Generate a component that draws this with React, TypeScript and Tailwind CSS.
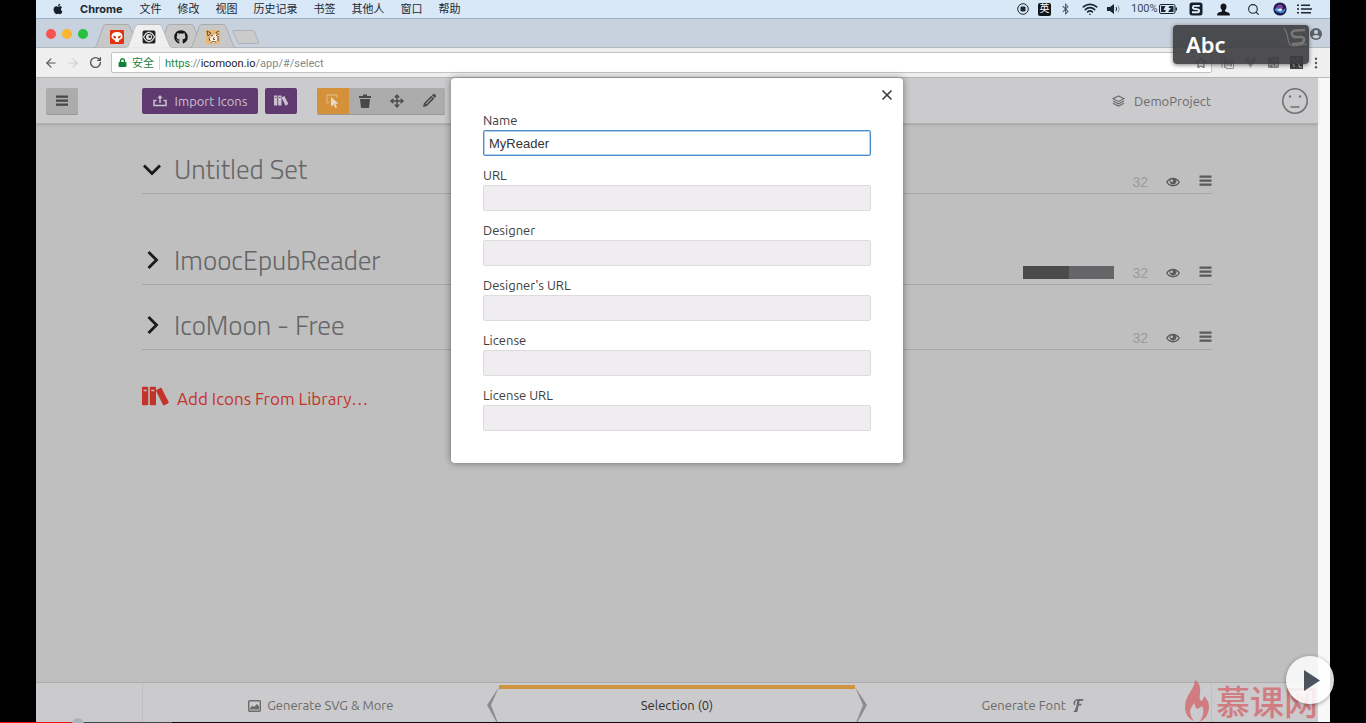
import React from "react";
import { ImBooks, ImEye, ImFont, ImPencil } from "react-icons/im";
import { FaApple, FaBluetoothB, FaGithub, FaLock } from "react-icons/fa";
import { ArrowLeft, ArrowRight, Move, RotateCw, Search, Star, Wifi, X } from "lucide-react";

const MENUS = ["文件", "修改", "视图", "历史记录", "书签", "其他人", "窗口", "帮助"];

const FIELDS = [
  { id: "name", label: "Name", value: "MyReader" },
  { id: "url", label: "URL", value: "" },
  { id: "designer", label: "Designer", value: "" },
  { id: "designer-url", label: "Designer's URL", value: "" },
  { id: "license", label: "License", value: "" },
  { id: "license-url", label: "License URL", value: "" },
];

function Bars({ className }: { className: string }) {
  return (
    <svg viewBox="0 0 12 11" className={className} fill="currentColor" aria-hidden="true">
      <rect x="0" y="0.5" width="12" height="2.300" />
      <rect x="0" y="4.5" width="12" height="2.300" />
      <rect x="0" y="8.5" width="12" height="2.300" />
    </svg>
  );
}

function SogouMark({ className }: { className: string }) {
  return (
    <svg viewBox="0 0 14 14" className={className} aria-hidden="true">
      <rect x="0.5" y="0.5" width="13" height="13" rx="2.5" fill="#14202c" />
      <path d="M10.8 3.9H5.2c-1.600 0-1.800 2.600-.2 2.900l4 .6c1.700.3 1.500 2.900-.2 2.900H3" fill="none" stroke="#e4eef8" strokeWidth="1.900" />
    </svg>
  );
}

function MenuBar() {
  return (
    <div className="flex h-[19px] items-center border-b border-[#9db2c9] bg-[#d8e8f7] pl-4 pr-[18px] text-[11px] text-[#1d2730]">
      <FaApple className="mr-4 size-3 shrink-0 text-[#17202a]" />
      <span className="mr-[17px] font-['Inter'] font-bold">Chrome</span>
      <nav className="flex gap-4">
        {MENUS.map((m) => (
          <span key={m} className="whitespace-nowrap">{m}</span>
        ))}
      </nav>
      <div className="ml-auto flex items-center">
        <svg viewBox="0 0 12 12" className="size-3" aria-hidden="true">
          <circle cx="6" cy="6" r="5.300" fill="none" stroke="#1d2730" />
          <rect x="3.500" y="3.500" width="5" height="5" rx="1" fill="#1d2730" />
        </svg>
        <span className="ml-[9px] flex size-[13px] items-center justify-center rounded-xs bg-[#10161c] text-[10px] leading-none text-white">英</span>
        <FaBluetoothB className="ml-[10px] h-3 w-[9px] text-[#46535f]" />
        <Wifi className="ml-3 size-4" strokeWidth={2.5} />
        <svg viewBox="0 0 14 12" className="ml-[9px] h-3 w-[14px]" aria-hidden="true">
          <path d="M0 4h3l4-3v10L3 8H0z" fill="#1d2730" />
          <path d="M9 4q1.200 2 0 4" fill="none" stroke="#1d2730" />
          <path d="M11 2.500q2.500 3.500 0 7" fill="none" stroke="#8a98a5" />
        </svg>
        <span className="ml-[10px] w-[26px] font-['Roboto'] text-[#3c4853]">100%</span>
        <svg viewBox="0 0 19 10" className="ml-[2px] h-[10px] w-[19px]" aria-hidden="true">
          <rect x="0.500" y="0.500" width="15.500" height="9" rx="1.500" fill="none" stroke="#1d2730" />
          <path d="M2 2h4.500L4.500 6H7l-1 2H2zM14.500 8H9l3-4H9.500l1-2h4z" fill="#1d2730" />
          <path d="M17.300 3.500v3" stroke="#1d2730" strokeWidth="1.500" />
        </svg>
        <SogouMark className="ml-[11px] size-[14px]" />
        <svg viewBox="0 0 13 13" className="ml-[14px] size-[13px]" fill="#10161c" aria-hidden="true">
          <path d="M6.500.5c2 0 3 1.300 3 3.200 0 1.500-.7 2.500-1.500 3.300v1.300c1 1 4.300 1 4.800 2.700V12.500H.2V11c.5-1.700 3.800-1.700 4.800-2.700V7C4.200 6.200 3.500 5.200 3.500 3.700 3.500 1.800 4.500.5 6.500.5z" />
        </svg>
        <Search className="ml-[17px] size-[13px]" strokeWidth={2} />
        <svg viewBox="0 0 14 14" className="ml-[13px] size-[14px]" aria-hidden="true">
          <circle cx="7" cy="7" r="6.600" fill="#1c1f4e" />
          <path d="M1.500 8q3-5 5.500-1.500T12.500 6q-.5 4.500-4 5T1.500 8z" fill="#4795e0" />
          <path d="M3 5q2.500-3.500 6-2l1.500 3L7 8z" fill="#7f3f9d" />
          <path d="M4 8l3-1.500L9.500 7 7.500 9z" fill="#fff" />
        </svg>
        <svg viewBox="0 0 15 10" className="ml-[10px] h-[10px] w-[15px]" fill="#1d2730" aria-hidden="true">
          <path d="M0 .5h2V2H0zM0 4.300h2v1.500H0zM0 8h2v1.500H0zM4 .5h9V2H4zM4 4.300h11v1.500H4zM4 8h10v1.500H4z" />
        </svg>
      </div>
    </div>
  );
}

function Tab({ active, first, label, children }: { active?: boolean; first?: boolean; label: string; children: React.ReactNode }) {
  return (
    <button
      type="button"
      aria-label={label}
      className={`relative flex h-6 w-[46px] items-center justify-center ${first ? "" : "-ml-[14px]"} ${active ? "z-10" : ""}`}
    >
      <svg viewBox="0 0 46 24" className="absolute inset-0 size-full" aria-hidden="true">
        <path
          d="M0 24Q1.800 23.500 2.800 21L9 3Q9.800.5 12 .5h21q2.200 0 3 2.500l7.200 18q1 2.500 2.800 3z"
          fill={active ? "#f0efef" : "#c9c8c8"}
          stroke={active ? "#b3b6ba" : "#a0a3a6"}
          strokeWidth="0.800"
        />
        {active && <path d="M1 24h44" stroke="#f0efef" strokeWidth="1.500" />}
      </svg>
      <span className="relative pt-px">{children}</span>
    </button>
  );
}

function TabStrip() {
  return (
    <div className="flex h-[29px] items-end border-b border-[#b4b8bd] bg-[#c8d2de] pl-[10px] pr-2">
      <div className="mb-2 mr-[6px] flex gap-[6px] self-end">
        <span className="size-[10px] rounded-full bg-[#f5544f]" />
        <span className="size-[10px] rounded-full bg-[#fbb52e]" />
        <span className="size-[10px] rounded-full bg-[#27c13d]" />
      </div>
      <div className="-mb-px flex">
        <Tab label="慕课网" first>
          <svg viewBox="0 0 14 14" className="size-[14px]" aria-hidden="true">
            <rect width="14" height="14" rx="1" fill="#e2330f" />
            <path d="M1.500 6.500Q1.500 2 7 2t5.500 4.500Q12.500 9 9.500 9.800L8.500 12h-3l-1-2.200Q1.500 9 1.500 6.500z" fill="#fff" />
            <path d="M3 5.500l3 1v1.800H4zM11 5.500l-3 1v1.800h2z" fill="#e2330f" />
          </svg>
        </Tab>
        <Tab label="IcoMoon App" active>
          <svg viewBox="0 0 14 14" className="size-[14px]" aria-hidden="true">
            <rect x="0.600" y="0.600" width="12.800" height="12.800" rx="1.500" fill="#222" />
            <path d="M1.500 7L4 3.500 7 2l3 1.500L12.500 7 10 10.500 7 12l-3-1.500z" fill="none" stroke="#f3f3f3" strokeWidth="1.100" />
            <circle cx="7" cy="7" r="3" fill="#e6e6e6" />
            <circle cx="7.800" cy="6.800" r="1.300" fill="#222" />
          </svg>
        </Tab>
        <Tab label="GitHub">
          <FaGithub className="size-[14px] text-[#161616]" />
        </Tab>
        <Tab label="Cat">
          <svg viewBox="0 0 14 14" className="size-[14px]" aria-hidden="true">
            <rect width="14" height="14" fill="#e9b871" />
            <path d="M1 1l4 2 6-1 2 3v6l-3 2H5L2 9z" fill="#e2b67c" />
            <path d="M5 6l5-2 2 5-3 4H6L4 10z" fill="#fbf1df" />
            <path d="M1 1l1 5 3-3zM13 1l-3 1.500L12.500 5M5 6l2-.5M10 5l1 1M3 8l1 3M8 7l-.500 2.500L9 9.500M5 12.500l2-1 3 .5M12 6v5" fill="none" stroke="#5f3f22" strokeWidth="0.900" />
          </svg>
        </Tab>
      </div>
      <button type="button" aria-label="New tab" className="-ml-1 mb-[3px] h-[14px] w-7">
        <svg viewBox="0 0 28 14" className="size-full" aria-hidden="true">
          <path d="M2 .5h18.500q1.500 0 2 1.500l4 10q.5 1.500-1 1.500H7.500q-1.500 0-2-1.500L1 2Q.5.5 2 .5z" fill="#cbcbcb" stroke="#a4a7ab" strokeWidth="0.800" />
        </svg>
      </button>
      <svg viewBox="0 0 12 12" className="mb-[7px] ml-auto size-3" aria-hidden="true">
        <circle cx="6" cy="6" r="6" fill="#5c6168" />
        <circle cx="6" cy="4" r="2" fill="#c8d2de" />
        <path d="M2.300 8.800Q3 7 6 7t3.700 1.800Q8 10.500 6 10.500T2.300 8.800z" fill="#c8d2de" />
      </svg>
    </div>
  );
}

function AddressRow() {
  return (
    <div className="flex h-[30px] items-center border-b border-[#b9b9b9] bg-[#f0efef] pl-2 pr-3">
      <button type="button" aria-label="Back" className="text-[#555]"><ArrowLeft className="size-[14px]" /></button>
      <button type="button" aria-label="Forward" className="ml-2 text-[#cfcfcf]"><ArrowRight className="size-[14px]" /></button>
      <button type="button" aria-label="Reload" className="ml-[9px] text-[#555]"><RotateCw className="size-[13px]" strokeWidth={2.5} /></button>
      <div className="ml-[9px] flex h-[21px] flex-1 items-center rounded-xs border border-[#c2c2c2] bg-white pl-[6px] pr-1 text-[11px]">
        <FaLock className="size-[9px] text-[#128038]" />
        <span className="ml-[5px] border-r border-[#d5d5d5] pr-[5px] leading-[14px] text-[#1b7f3e]">安全</span>
        <span className="ml-[5px] pt-[2px] font-['Roboto'] leading-[14px] text-[#85898c]">
          <span className="text-[#1b8a42]">https</span>://<span className="text-[#222]">icomoon.io</span>/app/#/select
        </span>
        <Star className="ml-auto size-3 text-[#555]" />
      </div>
      <div className="ml-[9px] flex items-center gap-[10px] text-[#999]">
        <svg viewBox="0 0 13 13" className="size-[13px]" aria-hidden="true">
          <path d="M1 1v11M3.500 1v11" stroke="currentColor" />
          <path d="M5 4h7.500v8.500H5zM7 6v4M9 6v4h1.500V6z" fill="none" stroke="currentColor" />
        </svg>
        <svg viewBox="0 0 13 13" className="size-[13px]" aria-hidden="true"><path d="M0 1h4l2.500 5L9 1h4L6.500 12z" fill="#a9aaaa" /></svg>
        <svg viewBox="0 0 13 13" className="size-[13px]" aria-hidden="true">
          <rect x="1" y="1" width="11" height="11" rx="1" fill="#8e8e8e" />
          <path d="M6 3h4M6 5h4M2 9h4v2M8 9h3" stroke="#eee" />
        </svg>
        <svg viewBox="0 0 13 13" className="size-[13px]" aria-hidden="true">
          <rect width="13" height="13" fill="#444" />
          <path d="M1 3h3v2h3V2h4M2 8h2v3M6 7h3v4h3M10 5h2" fill="none" stroke="#bbb" />
        </svg>
      </div>
      <svg viewBox="0 0 4 12" className="ml-[11px] h-3 w-1 shrink-0" fill="#555" aria-hidden="true">
        <circle cx="2" cy="1.700" r="1.200" /><circle cx="2" cy="6" r="1.200" /><circle cx="2" cy="10.300" r="1.200" />
      </svg>
    </div>
  );
}

function AppHeader() {
  const tool = "flex h-[26px] w-8 items-center justify-center";
  return (
    <header className="flex h-[46px] shrink-0 items-center border-b border-[#adadad] bg-[#cbcacc] px-[10px] text-[#494949] shadow-sm">
      <button type="button" aria-label="Menu" className="mr-16 flex h-[26px] w-8 items-center justify-center rounded-xs bg-[#acacac] shadow-[0_1px_0_#979797]">
        <Bars className="h-[11px] w-3" />
      </button>
      <button type="button" className="mr-[7px] flex h-[26px] w-[116px] items-center justify-center gap-2 whitespace-nowrap rounded-xs bg-[#5f3a70] text-[#cbc1d0]">
        <svg viewBox="0 0 14 12" className="h-3 w-[14px]" fill="none" stroke="currentColor" strokeWidth="1.500" aria-hidden="true">
          <path d="M3.500 5.500H1v5h12v-5h-2.500M7 8V2" />
          <path d="M7 0L4.300 3.200h5.400z" fill="currentColor" stroke="none" />
        </svg>
        <span className="pt-[2px] text-[13px]">Import Icons</span>
      </button>
      <button type="button" aria-label="Library" className="mr-5 flex h-[26px] w-8 items-center justify-center rounded-xs bg-[#5f3a70] text-[#cbc1d0]">
        <ImBooks className="size-[15px]" />
      </button>
      <div className="flex overflow-hidden rounded-xs bg-[#acacac] shadow-[0_1px_0_#979797]">
        <button type="button" aria-label="Select" className={`${tool} bg-[#d4913a] text-[#ead9c3]`}>
          <svg viewBox="0 0 14 14" className="size-[14px]" aria-hidden="true">
            <path d="M3.500 8.500H1V1h10v3" fill="none" stroke="#dfb275" strokeWidth="1.300" />
            <path d="M5 3l7.500 6.500-3.300.2 1.800 3.300-1.700.9-1.700-3.400L5 12.500z" fill="currentColor" />
          </svg>
        </button>
        <button type="button" aria-label="Remove" className={tool}>
          <svg viewBox="0 0 14 14" className="size-[14px]" fill="currentColor" aria-hidden="true">
            <path d="M1 2h4V.500h4V2h4v2H1zM2 5h10l-1 9H3z" />
          </svg>
        </button>
        <button type="button" aria-label="Move" className={tool}><Move className="size-[14px]" strokeWidth={2.500} /></button>
        <button type="button" aria-label="Edit" className={tool}><ImPencil className="size-[13px]" /></button>
      </div>
      <div className="ml-auto flex items-center gap-[9px] text-[13px] text-[#6c6c6c]">
        <svg viewBox="0 0 14 13" className="h-3 w-[13px]" fill="none" stroke="currentColor" strokeWidth="1.200" aria-hidden="true">
          <path d="M7 1l6 3-6 3-6-3zM1 6.500l6 3 6-3M1 9l6 3 6-3" />
        </svg>
        <span className="pt-[2px]">DemoProject</span>
      </div>
      <svg viewBox="0 0 26 26" className="ml-[71px] size-[26px] shrink-0" fill="none" stroke="#6f6f6f" strokeWidth="1.500" aria-hidden="true">
        <circle cx="13" cy="13" r="12.200" />
        <path d="M8.500 19h9" />
        <path d="M8 7.500v2M18 7.500v2" strokeWidth="2.200" />
      </svg>
    </header>
  );
}

function SetRow({ title, open, swatch }: { title: string; open?: boolean; swatch?: boolean }) {
  return (
    <section className="flex h-[46px] items-center border-b border-[#a6a6a8]">
      <button type="button" className="flex items-center whitespace-nowrap pb-1 font-['Titillium_Web','Open_Sans',sans-serif] text-[27px] leading-9 font-light text-[#666668]">
        <svg viewBox="0 0 20 20" className="mr-3 size-5" fill="none" stroke="#1a1a1a" strokeWidth="2.800" aria-hidden="true">
          <path d={open ? "M2 6.500l8 8 8-8" : "M6.500 2l8 8-8 8"} />
        </svg>
        {title}
      </button>
      <div className="ml-auto flex items-center pt-[22px] text-[#5c5c5c]">
        {swatch && (
          <div className="mr-[18px] flex h-[13px] w-[91px]">
            <span className="flex-1 bg-[#4a4a4a]" />
            <span className="flex-1 bg-[#656567]" />
          </div>
        )}
        <span className="mr-[18px] font-['Liberation_Sans'] text-sm leading-5 text-[#9b9b9b]">32</span>
        <button type="button" aria-label="Toggle visibility"><ImEye className="size-[14px]" /></button>
        <button type="button" aria-label="Set menu" className="ml-[19px] pb-[2px]"><Bars className="h-[11px] w-[13px]" /></button>
      </div>
    </section>
  );
}

function Dialog() {
  return (
    <div className="pointer-events-none absolute inset-x-0 top-0 z-20 flex justify-center">
      <form role="dialog" aria-label="Set metadata" className="pointer-events-auto relative flex w-[452px] flex-col gap-[9px] rounded-sm bg-white p-8 shadow-[0_0_7px_rgba(0,0,0,0.45)]">
        <button type="button" aria-label="Close" className="absolute right-2 top-[9px] text-[#3c3c3c]"><X className="size-4" strokeWidth={2.500} /></button>
        {FIELDS.map((f, i) => (
          <div key={f.id} className="flex flex-col">
            <label htmlFor={f.id} className="text-[13px] leading-5 text-[#3d3d3d]">{f.label}</label>
            <input
              id={f.id}
              type="text"
              defaultValue={f.value}
              className={`h-[26px] w-full rounded-xs border px-[5px] font-['Liberation_Sans'] text-[13px] text-[#333] outline-none ${
                i === 0 ? "border-[#4c8dcb] bg-white shadow-[inset_0_0_0_1px_#b5d0ea]" : "border-[#dcdcdc] bg-[#efedf0]"
              }`}
            />
          </div>
        ))}
      </form>
    </div>
  );
}

function Footer() {
  const cell = "flex items-center justify-center gap-[6px] whitespace-nowrap pt-[6px]";
  return (
    <footer className="grid h-10 shrink-0 grid-cols-3 border-t border-[#acacac] bg-[#cbcacc] px-[106px] text-[13px] text-[#6b6b6b]">
      <button type="button" className={`${cell} border-l border-[#c0bebf]`}>
        <svg viewBox="0 0 13 12" className="h-3 w-[13px]" aria-hidden="true">
          <rect x="0.700" y="0.700" width="11.600" height="10.600" rx="1" fill="none" stroke="currentColor" strokeWidth="1.400" />
          <path d="M2 9.500V8l2.500-2.500L6 7l3-3 2 2.500v3z" fill="currentColor" />
        </svg>
        Generate SVG &amp; More
      </button>
      <button type="button" className={`${cell} relative text-[#2f2f2f]`}>
        <span className="absolute inset-x-0 top-[2px] h-1 bg-[#cf9440]" />
        <svg viewBox="0 0 12 36" className="absolute -left-3 top-1 h-9 w-3" aria-hidden="true"><path d="M12 0L0 18l10 18h1L4 18z" fill="#8c8c8c" /></svg>
        <svg viewBox="0 0 12 36" className="absolute -right-3 top-1 h-9 w-3" aria-hidden="true"><path d="M0 0l12 18L2 36H1l7-18z" fill="#8c8c8c" /></svg>
        Selection (0)
      </button>
      <button type="button" className={`${cell} border-r border-[#c0bebf]`}>
        Generate Font
        <ImFont className="size-[13px]" />
      </button>
    </footer>
  );
}

export default function App() {
  return (
    <div className="relative flex h-screen flex-col overflow-hidden bg-black font-['Ubuntu','Noto_Sans','Noto_Sans_CJK_SC',sans-serif]">
      <div className="relative mx-9 flex min-h-0 flex-1 flex-col">
        <MenuBar />
        <TabStrip />
        <AddressRow />
        <div className="absolute right-[21px] top-[25px] z-30 flex h-[39px] w-[136px] items-center rounded-sm bg-[#3c3c3e]/90 pl-[13px] font-['Noto_Sans'] text-[22px] font-semibold text-white shadow-[0_1px_4px_rgba(0,0,0,0.5)]">
          Abc
          <svg viewBox="0 0 26 22" className="absolute right-0 top-px h-[22px] w-[26px]" fill="none" stroke="#77777a" aria-hidden="true">
            <path d="M1 2q3 4 4 11t6 7l13-2" strokeWidth="1.200" />
            <path d="M22 4l-10 .5q-4 1-3 4t5 2.500l4 0q4 .5 3 3.500t-4 3l-8 .5" strokeWidth="2.600" />
          </svg>
        </div>
        <div className="flex min-h-0 flex-1 bg-[#f8f8f8] pr-3">
          <div className="relative flex min-w-0 flex-1 flex-col bg-[#bfbfbf]">
            <AppHeader />
            <main className="flex-1 px-[106px] pt-6">
              <SetRow title="Untitled Set" open />
              <div className="h-[45px]" />
              <SetRow title="ImoocEpubReader" swatch />
              <div className="h-[19px]" />
              <SetRow title="IcoMoon - Free" />
              <a href="#library" className="mt-[31px] inline-flex items-center gap-[7px] text-[17px] leading-6 text-[#c23329]">
                <ImBooks className="size-7" />
                <span className="pt-[6px]">Add Icons From Library…</span>
              </a>
            </main>
            <Footer />
            <Dialog />
          </div>
        </div>
        <div className="pointer-events-none absolute bottom-0 right-3 flex items-end gap-[7px] text-[#d45c60] opacity-70">
          <svg viewBox="0 0 24 42" className="h-[42px] w-6" fill="currentColor" aria-hidden="true">
            <path d="M10 0C10 9 0 15 0 27c0 7 4 12 9 14-3-4-5-9-3-13 1-2 2-3 3-5 1 2 1 4 3 6 2-1 4-2 5-3 1 2 2 5 1 8-1 4-2 6-4 8 6-2 10-8 10-15 0-5-2-8-5-11 0 2-1 4-3 5-3-4 0-8-1-13-.5-4-2-6-5-8z" />
          </svg>
          <span className="text-[34px] font-medium leading-[40px]">慕课网</span>
        </div>
      </div>
      <div className="relative h-px shrink-0 bg-[#120510]">
        <div className="absolute left-0 top-0 h-px w-[172px] bg-[#3c454b]" />
        <div className="absolute left-0 top-0 h-px w-[78px] bg-[#f01010]" />
        <div className="absolute bottom-[-7px] left-[72px] size-3 rounded-full bg-[#aab4b9]" />
      </div>
      <button type="button" aria-label="Play" className="absolute bottom-[19px] right-8 z-40 flex size-12 items-center justify-center rounded-full bg-white/85 shadow-[0_1px_4px_rgba(0,0,0,0.4)]">
        <svg viewBox="0 0 16 21" className="ml-1 h-[21px] w-4" fill="#4b545c" aria-hidden="true"><path d="M0 0l16 10.500L0 21z" /></svg>
      </button>
    </div>
  );
}
